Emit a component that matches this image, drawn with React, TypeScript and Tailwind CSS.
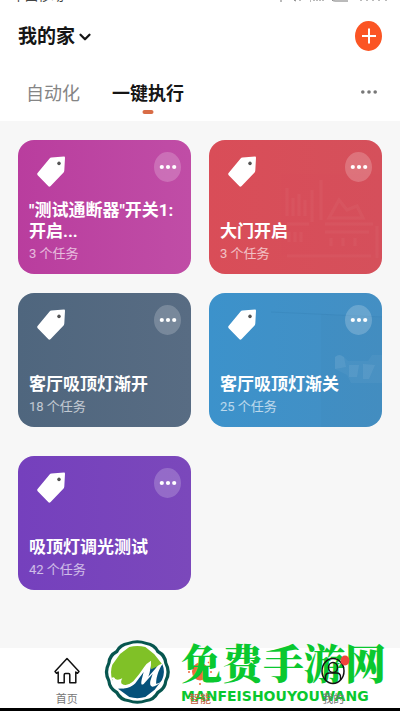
import { ChevronDown } from "lucide-react";

const scenes = [
  { id: 1, title: '"测试通断器"开关1:开启...', tasks: 3, color: "bg-linear-to-r from-[#b93d9e] to-[#c04da6]", extra: "" },
  { id: 2, title: "大门开启", tasks: 3, color: "bg-linear-to-r from-[#d94d58] to-[#d5505b]", extra: "" },
  { id: 3, title: "客厅吸顶灯渐开", tasks: 18, color: "bg-linear-to-r from-[#4f667e] to-[#586c83]", extra: "" },
  { id: 4, title: "客厅吸顶灯渐关", tasks: 25, color: "bg-linear-to-r from-[#3c92cb] to-[#448fc3]", extra: "" },
  { id: 5, title: "吸顶灯调光测试", tasks: 42, color: "bg-linear-to-r from-[#7540bd] to-[#7b48bb]", extra: "mt-2.5" },
];

function TagIcon() {
  return (
    <svg viewBox="0 0 28 31" className="w-7 h-[31px]" aria-hidden="true">
      <path
        d="M14.5 1.6 27 .6Q28 .5 28 1.7L27.3 14.5Q27.2 15.6 26.6 16.5L13.4 30.2Q12.3 31.2 11.2 30.1L.7 19.2Q-.3 18.1.6 17L12.4 2.8Q13.3 1.7 14.5 1.6Z"
        fill="#fff"
      />
      <ellipse cx="22" cy="7.3" rx="1.7" ry="1.9" fill="#555" />
    </svg>
  );
}

function Dots({ color, r }: { color: string; r: number }) {
  return (
    <svg viewBox="0 0 18 6" className="w-[18px] h-1.5" aria-hidden="true">
      <circle cx="2.8" cy="3" r={r} fill={color} />
      <circle cx="9" cy="3" r={r} fill={color} />
      <circle cx="15.2" cy="3" r={r} fill={color} />
    </svg>
  );
}

function Interior({ id }: { id: number }) {
  if (id === 2) {
    return (
      <svg viewBox="0 0 173 134" className="absolute inset-0 w-full h-full" aria-hidden="true">
        <g fill="none" stroke="#fff" strokeWidth="3" opacity="0.03">
          <path d="M78 76V48M84 76V58M90 76V54M96 76V60M103 82V50M112 80V40M78 84h22M80 92v10M86 92v10M92 92v10" />
          <path d="m120 78 10-18 8 10 10-4 6 12ZM116 84h48M116 92h44M122 98v8M134 98v8M146 98v8M168 86v32M78 116h84" />
        </g>
      </svg>
    );
  }
  if (id === 4) {
    return (
      <svg viewBox="0 0 173 134" className="absolute inset-0 w-full h-full" aria-hidden="true">
        <path d="M112 21 173 25V134H112Z" fill="#315f85" opacity="0.03" />
        <path d="M126 64q4-4 9 0l4 4h20l4-6h10v28H142l-4-8-12-6Z" fill="#fff" opacity="0.04" />
        <path d="M126 64q4-4 9 0l2 10-11 2ZM140 72h10l-2 12h-8ZM154 71l12 1-6 14h-6Z" fill="#fff" opacity="0.07" />
        <path d="M62 19 173 24" stroke="#23699a" opacity="0.14" />
      </svg>
    );
  }
  return null;
}

function SceneCard({ scene }: { scene: (typeof scenes)[number] }) {
  return (
    <article className={`relative flex flex-col justify-between min-h-[134px] rounded-2xl overflow-hidden pl-[11px] pr-2.5 pt-3 pb-3 text-white ${scene.color} ${scene.extra}`}>
      <Interior id={scene.id} />
      <div className="relative flex items-start justify-between pl-2">
        <div className="pt-1">
          <TagIcon />
        </div>
        <button aria-label="更多" className="flex items-center justify-center w-[27px] h-[30px] rounded-[50%] bg-white/20">
          <Dots color="#fff" r={2.1} />
        </button>
      </div>
      <div className="relative">
        <h2 className="text-[17px] leading-[21px] font-bold">{scene.title}</h2>
        <p className="mt-1 text-[13px] leading-4 text-white/65">{scene.tasks} 个任务</p>
      </div>
    </article>
  );
}

function Logo() {
  return (
    <svg viewBox="0 0 201 192" className="w-[67px] h-16 shrink-0" aria-hidden="true">
      <path
        d="M72 6Q100-4 128 6Q155 10 165 31Q188 43 190 68Q205 96 190 124Q188 149 165 161Q152 184 128 186Q100 197 72 186Q46 184 35 161Q12 149 10 124Q-5 96 10 68Q12 43 35 31Q45 10 72 6Z"
        fill="#07564f"
      />
      <path
        d="M75 14Q100 6 125 14Q149 18 158 38Q179 49 181 71Q194 96 181 121Q179 143 158 154Q147 175 125 178Q100 187 75 178Q53 175 42 154Q21 143 19 121Q6 96 19 71Q21 49 42 38Q51 18 75 14Z"
        fill="#fff"
      />
      <path d="M76 21Q100 15 124 21L151 43 174 72 150 92 60 142 36 120 25 121Q17 96 25 74L48 42Z" fill="#80c127" />
      <path d="M175 72Q185 96 174 120L152 149 124 171Q100 178 76 171L42 146Q76 146 96 122L136 72 142 88Z" fill="#05517a" />
      <path d="M23 114Q30 109 34 117Q42 122 55 115Q49 125 53 131Q68 141 88 124Q106 104 120 82Q128 69 141 62Q142 84 133 110L154 86Q164 73 178 70Q167 82 160 106Q155 124 157 132L169 127Q158 139 145 140Q136 138 139 123L146 101L119 132Q109 139 113 119L119 96L94 130Q75 150 46 144Q34 140 23 114Z" fill="#fff" />
    </svg>
  );
}

export default function App() {
  return (
    <div className="relative flex flex-col min-h-screen bg-[#f7f7f7] overflow-hidden font-[Roboto,'Noto_Sans_CJK_SC',sans-serif] text-[#151515]">
      <header className="bg-white">
        <div className="flex items-end justify-between h-1 overflow-hidden pl-3 pr-3 text-[13px] leading-4 text-[#444]">
          <span>中国移动</span>
          <svg viewBox="0 0 110 4" className="w-[110px] h-1" aria-hidden="true">
            <path d="M3 0v2M16 0l2 1M22 0v1M32 1h1M36 0v1M39 0v1M42 0v1M45 0v1M54 0q1 1 3 1h13M83 0v1M89 0v1M95 0v1M101 0v1M108 0v1" stroke="#777" fill="none" />
          </svg>
        </div>
        <div className="flex items-center justify-between h-16 pl-[18px] pr-[18px]">
          <button className="flex items-center gap-px pt-0.5 text-[19px] leading-6 font-bold">
            我的家
            <ChevronDown className="w-[18px] h-[18px]" strokeWidth={3} />
          </button>
          <button aria-label="添加" className="flex items-center justify-center w-[27px] h-[30px] rounded-[50%] bg-[#fb5524]">
            <svg viewBox="0 0 14 16" className="w-3.5 h-4" aria-hidden="true">
              <path d="M7 .5v15M0 8h14" stroke="#fff" strokeWidth="2" />
            </svg>
          </button>
        </div>
        <nav className="flex items-center justify-between h-[53px] pl-[26px] pr-[22px] pb-0.5 text-[18px] leading-6">
          <div className="flex gap-8">
            <button className="text-[#858585]">自动化</button>
            <button className="relative font-bold">
              一键执行
              <span className="absolute left-1/2 -translate-x-1/2 -bottom-2 w-[11px] h-1 rounded-full bg-[#d86c46]" />
            </button>
          </div>
          <button aria-label="更多" className="pb-1">
            <Dots color="#777" r={1.8} />
          </button>
        </nav>
      </header>

      <main className="flex-1 grid grid-cols-2 content-start gap-x-[18px] gap-y-[19px] px-[18px] pt-[19px] pb-6">
        {scenes.map((scene) => (
          <SceneCard key={scene.id} scene={scene} />
        ))}
      </main>

      <nav className="grid grid-cols-3 h-[63px] bg-white border-b-3 border-black text-[11px] leading-4 text-[#777]">
        <a href="#home" className="flex flex-col items-center pt-[9px] gap-[7px]">
          <svg viewBox="0 0 26 28" className="w-[26px] h-7" fill="none" stroke="#111" strokeWidth="1.5" strokeLinejoin="round" aria-hidden="true">
            <path d="M13 1.5 25 14.5l-1.5 1.8-1.7-1.3v10.8h-6v-8q0-1.2-1.2-1.2h-3.2q-1.2 0-1.2 1.2v8h-6V15l-1.7 1.3L1 14.5Z" />
          </svg>
          首页
        </a>
        <a href="#smart" className="flex flex-col items-center pt-[9px] gap-[7px] text-[#c0623f]">
          <svg viewBox="0 0 26 28" className="w-[26px] h-7" aria-hidden="true">
            <ellipse cx="13" cy="14.5" rx="8" ry="9" fill="#f06a3e" />
            <path d="M13 1v2M13 26v2M1 15h2M23 15h2M4 5l1 1M22 5l-1 1" stroke="#f06a3e" strokeWidth="1.5" />
          </svg>
          <span className="relative z-20">智能</span>
        </a>
        <a href="#mine" className="relative z-20 flex flex-col items-center pt-[9px] gap-[7px]">
          <svg viewBox="0 0 28 28" className="w-7 h-7 overflow-visible" fill="none" stroke="#111" strokeWidth="1.5" aria-hidden="true">
            <ellipse cx="14" cy="14" rx="11" ry="12.5" />
            <ellipse cx="14" cy="10.5" rx="4.5" ry="5" />
            <path d="M6.5 23v-3q0-4 4-4h7q4 0 4 4v3" />
            <ellipse cx="26" cy="3.5" rx="4.5" ry="5" fill="#f0443c" stroke="none" />
          </svg>
          我的
        </a>
      </nav>

      {/* brand overlay on top of the tab bar */}
      <div className="absolute z-10 left-[104px] bottom-[7px] flex items-end gap-2.5 pointer-events-none text-[#0ac82f]">
        <Logo />
        <div className="flex flex-col whitespace-nowrap font-bold">
          <span className="text-[41px] leading-[52px] font-black font-['Noto_Serif_CJK_SC','Noto_Sans_CJK_SC',serif]">免费手游网</span>
          <span className="text-[14px] leading-4 font-['DejaVu_Sans',sans-serif]">MANFEISHOUYOUWANG</span>
        </div>
      </div>
    </div>
  );
}
